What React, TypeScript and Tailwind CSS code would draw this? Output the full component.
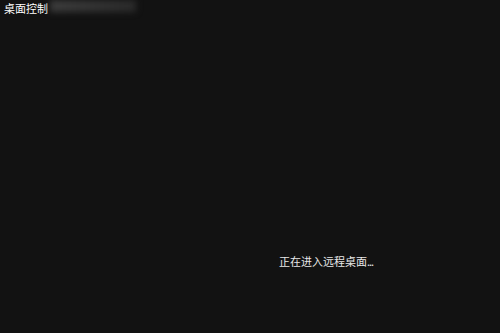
import React from "react";

const App = () => {
  return (
    <div
      className="w-[500px] h-[333px] bg-[#121212] overflow-hidden flex flex-col text-white"
      style={{ fontFamily: '"Noto Sans CJK SC", "Noto Sans", sans-serif' }}
    >
      <div className="flex items-start h-[16px]">
        <span className="pl-[4px] text-[11px] leading-[16px] text-white">桌面控制</span>
        <div className="ml-[2px] mt-0 w-[86px] h-[12px] bg-gradient-to-r from-[#3c3c3c] to-[#2a2a2a] blur-[3px]" />
      </div>
      <div className="pl-[279px] pt-[231px]">
        <span className="text-[11px] leading-[16px] text-[#e8e8e8]">
          正在进入远程桌面<span className="tracking-[-1px]">...</span>
        </span>
      </div>
    </div>
  );
};

export default App;
